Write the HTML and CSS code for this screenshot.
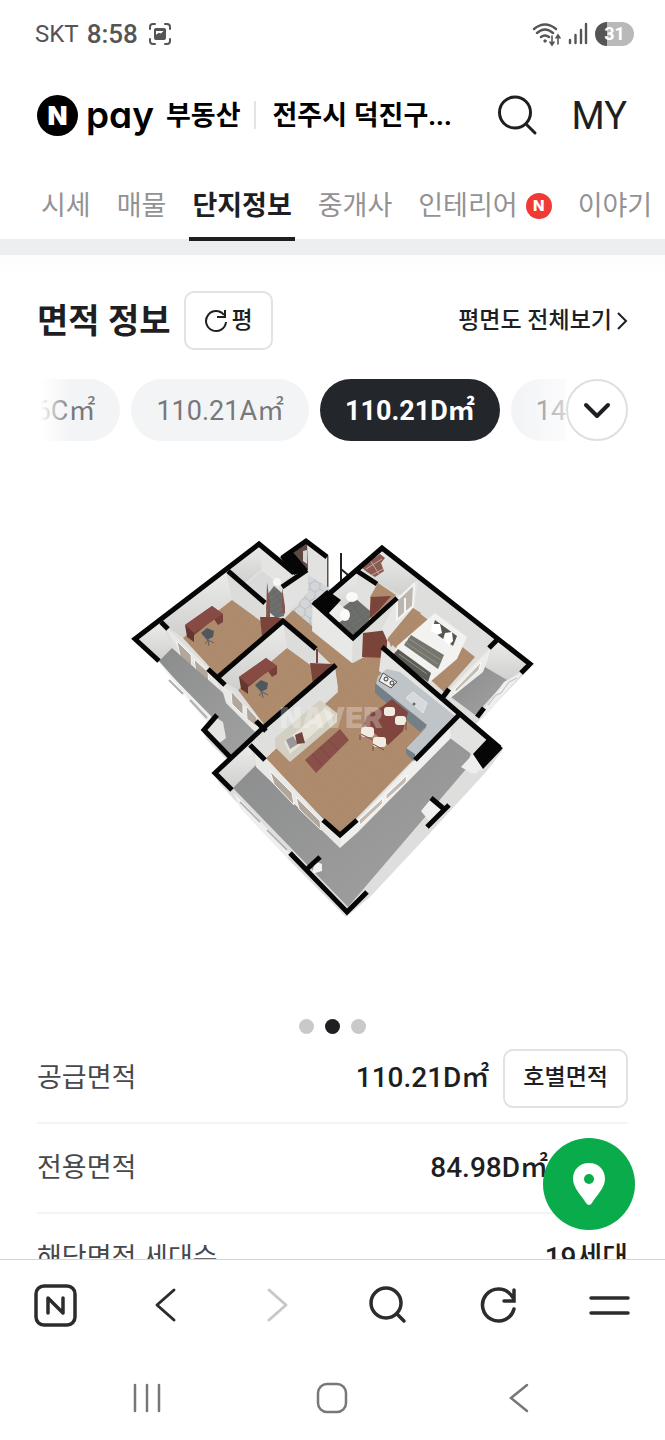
FILE: index.html
```
<!DOCTYPE html>
<html lang="ko">
<head>
    <meta charset="utf-8">
    <meta name="viewport" content="width=device-width, initial-scale=1">
    <title>Npay 부동산</title>
    <link rel="stylesheet" href="styles.css">
</head>
<body>
    <div class="status-bar">
        <span class="carrier">SKT</span>
        <span class="time">8:58</span>
        <svg class="capture" width="24" height="24" viewBox="0 0 24 24" fill="none" stroke="#555" stroke-width="2" stroke-linecap="round">
            <path d="M2 7V5q0-3 3-3h2M17 2h2q3 0 3 3v2M22 17v2q0 3-3 3h-2M7 22H5q-3 0-3-3v-2"/>
            <rect x="7" y="7" width="10" height="10" rx="1"/>
            <path d="M7 8h10M8 16v-2l3-2 2 1 3-3v6z" fill="#555"/>
        </svg>
        <svg class="wifi" width="30" height="26" viewBox="0 0 30 26" fill="none" stroke="#555" stroke-width="2.400" stroke-linecap="round">
            <path d="M2 8q11-9 22 0M5 12q8-7 16 0M9 16q4-3 8 0"/>
            <circle cx="13" cy="20" r="1.200" fill="#555" stroke-width="1"/>
            <path d="M20 15v8m-2-2l2 3 2-3M26 23v-8m-2 2l2-3 2 3" stroke-width="1.600"/>
        </svg>
        <svg width="20" height="24" viewBox="0 0 20 24" stroke="#555" stroke-width="2.400" stroke-linecap="round">
            <path d="M2 18v3M7.500 13v8M13 8v13M18 2v19"/>
        </svg>
        <span class="battery">31</span>
    </div>

    <header class="header">
        <a class="logo" href="#">
            <svg width="41" height="41" viewBox="0 0 41 41">
                <circle cx="20.500" cy="20.500" r="20.500"/>
                <text class="logo-n" x="20.500" y="30" text-anchor="middle">N</text>
            </svg>
            <span class="pay">pay</span>
            <span class="service">부동산</span>
        </a>
        <a class="region" href="#">전주시 덕진구...</a>
        <button class="icon-button search" aria-label="검색">
            <svg width="42" height="42" viewBox="0 0 42 42" fill="none" stroke="#1e1f23" stroke-width="3" stroke-linecap="round">
                <circle cx="19" cy="18.500" r="15.500"/>
                <path d="M30 30l9 9"/>
            </svg>
        </button>
        <a class="my" href="#">MY</a>
    </header>

    <nav class="tabs">
        <a href="#">시세</a>
        <a href="#">매물</a>
        <a class="active" href="#">단지정보</a>
        <a href="#">중개사</a>
        <a href="#">인테리어<span class="new">N</span></a>
        <a href="#">이야기</a>
    </nav>

    <main class="content">
        <div class="section-head">
            <h1>면적 정보</h1>
            <button class="outline-button unit">
                <svg width="24" height="24" viewBox="0 0 24 24" fill="none" stroke="#1e1f23" stroke-width="2">
                    <path d="M22 13a10 10 0 1 1-2-7M21 1v7h-8"/>
                </svg>
                평
            </button>
            <a class="view-all" href="#">평면도 전체보기
                <svg width="12" height="20" viewBox="0 0 12 20" fill="none" stroke="#1e1f23" stroke-width="2">
                    <path d="M2 2l8 8-8 8"/>
                </svg>
            </a>
        </div>

        <div class="sizes">
            <div class="size-list">
                <button class="size">84.96C㎡</button>
                <button class="size">110.21A㎡</button>
                <button class="size selected">110.21D㎡</button>
                <button class="size">142.12㎡</button>
            </div>
            <button class="more" aria-label="면적 더보기">
                <svg width="28" height="18" viewBox="0 0 28 18" fill="none" stroke="#1e1f23" stroke-width="4" stroke-linecap="round" stroke-linejoin="round">
                    <path d="M3 4l11 11L25 4"/>
                </svg>
            </button>
        </div>

        <svg class="plan" viewBox="37 441 591 578" role="img" aria-label="110.21D㎡ 평면도">
            <defs>
                <linearGradient id="wall" x1="0" y1="0" x2="0" y2="1">
                    <stop offset="0" stop-color="#ececea"/>
                    <stop offset="1" stop-color="#cfcfcd"/>
                </linearGradient>
                <linearGradient id="concrete" x1="0" y1="0" x2="1" y2="1">
                    <stop offset="0" stop-color="#8b8c8d"/>
                    <stop offset="1" stop-color="#a2a2a2"/>
                </linearGradient>
                <pattern id="wood" width="24" height="10" patternUnits="userSpaceOnUse" patternTransform="rotate(-48)">
                    <rect width="24" height="10" fill="#af8b6d"/>
                    <path d="M0 1h24M0 6h24M8 1v5M18 6v5" stroke="#a78466" stroke-width=".6"/>
                </pattern>
                <pattern id="tile" width="10" height="17" patternUnits="userSpaceOnUse">
                    <rect width="10" height="17" fill="#d3d6d8"/>
                    <path d="M5 0v3l5 3v5l-5 3v3M5 3L0 6v5l5 3" fill="none" stroke="#b4b9bc" stroke-width=".8"/>
                </pattern>
                <pattern id="slate" width="14" height="5" patternUnits="userSpaceOnUse" patternTransform="rotate(-36)">
                    <rect width="14" height="5" fill="#6c6f6c"/>
                    <path d="M0 0h14v5" fill="none" stroke="#5b5e5b" stroke-width=".7"/>
                </pattern>
                <g id="desk">
                    <path d="M0 19L27 0l11 8v8l-5 3-4-6-21 17z" fill="#74413a"/>
                    <path d="M0 19L27 0l11 8L9 27z" fill="#884b43"/>
                    <path d="M0 19l9 8v9l-7-5z" fill="#65362f"/>
                    <path d="M23 34l-3 4m3-4l6 3m-6-3l1 6" stroke="#5a6064"/>
                    <path d="M16 27l6-5 7 3-1 6-6 3z" fill="#50575d"/>
                </g>
            </defs>

            <!-- outer wall sides -->
            <path d="M133 639L159 662 210 718 202 730 207 740 232 765 214 774 220 784 290 861 346 917 370 897 430 833 452 809 486 772 503 750 476 724 530 668 532 663 382 546 353 570 330 592 327 556 306 539 282 559 259 542z" fill="#dededc"/>
            <path d="M328 558V588L352 570 342 566z" fill="#fff"/>
            <path d="M327 556v31" stroke="#5a5350" stroke-width="3"/>
            <path d="M341 553v28M341 569l7 6" stroke="#222" stroke-width="2"/>

            <!-- room 1 -->
            <path d="M161 622L226 570 232 600 183 638z" fill="url(#wall)"/>
            <path d="M226 570L265 603 262 626 232 600z" fill="#dcdcda"/>
            <path d="M183 638L232 600 262 622 274 628 219 677z" fill="url(#wood)"/>
            <use href="#desk" x="185" y="606"/>
            <path d="M164 625L216 676 220 690 176 645z" fill="#e8e8e6"/>
            <path d="M177 641l14 14 1 13-12-12zM194 659l14 13 1 12-13-12z" fill="#b3a79b" stroke="#f4f4f2"/>

            <!-- left balcony -->
            <path d="M135 639L161 622 172 648 159 661z" fill="url(#wall)"/>
            <path d="M159 661L172 648 222 692 262 732 232 757 218 744 217 727z" fill="url(#concrete)"/>
            <path d="M159 663L211 716 217 728 205 720z" fill="#efefed"/>
            <path d="M169 680l14 14M190 700l17 18" stroke="#aeb1b2" stroke-width="2"/>
            <path d="M204 730l11-13 8 5 3 16-9 7 15 17z" fill="#e4e4e2"/>

            <!-- bathroom 1 -->
            <path d="M228 569L259 543 262 570 245 584z" fill="url(#wall)"/>
            <path d="M259 543L294 573 280 584 262 570z" fill="#e4e4e2"/>
            <path d="M245 584l17-14 19 14-18 18z" fill="#dadada" stroke="#ececea"/>
            <path d="M268 594l6-8 9 8 1 22-8 2-10-9z" fill="url(#slate)"/>
            <path d="M267 582l3 22v18l-4-4zM282 588l3 2v24l-3-2z" fill="#84564d"/>
            <circle cx="277" cy="582" r="4" fill="#f6f6f4"/>

            <!-- entrance -->
            <path d="M282 587L307 570 308 592 286 613z" fill="#e2e2e0"/>
            <path d="M307 540L327 557 327 588 309 574z" fill="#e2e2e0"/>
            <path d="M308 575l20 12 3 5-19 10v26l-19-18 15-18z" fill="url(#tile)"/>
            <path d="M293 553l14-11 1 28-3-1z" fill="#5d4843"/>
            <path d="M303 551l4-1v14l-4-3z" fill="#d9d5d1"/>

            <!-- hall, living room and kitchen -->
            <path d="M284 619L293 610 318 631 353 663 364 657 384 650 382 675 427 727 407 748 413 760 340 835 323 819 266 758 338 692 335 668z" fill="url(#wood)"/>
            <path d="M335 668L338 688 318 705 276 748 266 758 252 745z" fill="#dfdfdd"/>
            <path d="M313 603L353 638 352 663 312 631z" fill="#e8e8e6"/>
            <path d="M353 638L397 598V616L364 650 352 663z" fill="#dddddb"/>
            <path d="M363 633l25-3-2 28-24-1z" fill="#7b443b"/>

            <!-- room 2 -->
            <path d="M217 678L283 620 287 648 238 690z" fill="url(#wall)"/>
            <path d="M283 620L317 648 313 667 287 648z" fill="#dcdcda"/>
            <path d="M238 690L287 648 313 667 325 675 266 727z" fill="url(#wood)"/>
            <use href="#desk" x="239" y="658"/>
            <path d="M220 682L262 724 258 735 226 703z" fill="#e8e8e6"/>
            <path d="M231 691l12 13v11l-11-11zM246 706l11 12v9l-10-8z" fill="#b3a79b" stroke="#f4f4f2"/>
            <path d="M310 663l23 1-20 21z" fill="#7b443b"/>
            <path d="M317 649v14" stroke="#7b443b" stroke-width="2"/>
            <path d="M260 617h17l7 2-14 11-8 6z" fill="#7b443b"/>

            <!-- bathroom 2 -->
            <path d="M330 593L358 571 355 598 330 617z" fill="url(#wall)"/>
            <path d="M358 571L376 584 370 611 355 598z" fill="#e1e1df"/>
            <path d="M343 607l12-9 15 13-1 9-16 15-17-14z" fill="url(#slate)"/>
            <path d="M328 612l11-8 10 8v6l-6 2-8 5z" fill="#ececea"/>
            <ellipse cx="345" cy="615" rx="5" ry="6" fill="#fafaf8"/>
            <ellipse cx="352" cy="597" rx="6" ry="5" fill="#fafaf8"/>

            <!-- dressing room -->
            <path d="M357 570L382 547 418 580 404 597 378 583z" fill="url(#wall)"/>
            <path d="M378 583l18 12-25 24-1-22z" fill="url(#wood)"/>
            <path d="M371 597l20-1-12 14-10 9z" fill="#7b443b"/>
            <path d="M361 567l19-13 5 4-4 5 3 8-9 6-8-5z" fill="#8c5b51"/>
            <path d="M366 569l16-10M372 575l11-6M370 560l9 14" stroke="#c3a8a0"/>

            <!-- bedroom -->
            <path d="M418 580L497 640 475 657 413 608z" fill="#dededc"/>
            <path d="M386 639L413 608 475 657 444 692z" fill="url(#wood)"/>
            <path d="M382 629l13-26 23-23-4 27-27 33z" fill="#e6e6e4"/>
            <path d="M388 638l25-30 8 5-30 34z" fill="url(#wood)"/>
            <path d="M397 600l17-16-1 22-16 14z" fill="#bcb6ae" stroke="#f4f4f2" stroke-width="2"/>
            <path d="M405 598v15" stroke="#f4f4f2" stroke-width="2"/>
            <path d="M435 613L467 637 457 659 430 682 394 654 397 646z" fill="#f2f2f0"/>
            <path d="M435 620l22 16-4 10-21-15z" fill="#55564f"/>
            <path d="M432 624l8 0 2 9-5 2-6-4zM445 633l7-1 1 9-4 4-6-5z" fill="#fff"/>
            <path d="M411 635l33 20-6 14-34-24z" fill="#77766e"/>
            <path d="M398 649l33 24-3 9-36-26z" fill="#5c5b56"/>
            <path d="M399 654l28 20M405 642l33 22M408 638l33 22" stroke="#94938b"/>

            <!-- right balcony -->
            <path d="M497 640L532 663 507 681 485 667z" fill="url(#wall)"/>
            <path d="M485 667L507 680 475 715 451 697z" fill="url(#concrete)"/>
            <path d="M493 645L483 672 448 700 449 690z" fill="#ecece9"/>
            <path d="M455 689l26-27-2 8-24 23z" fill="#c4bdb4" stroke="#fff"/>
            <path d="M524 671L482 720 484 709 504 682z" fill="#eee"/>
            <path d="M488 705l8-10 5-2 8-11 8-4" fill="none" stroke="#bbb"/>

            <!-- kitchen counter -->
            <path d="M382 647L458 712 450 724 379 671z" fill="#e4e4e2"/>
            <path d="M378 676L387 669 400 672 456 717 413 758 407 748 427 727 376 684z" fill="#bfc4c8"/>
            <path d="M375 683L427 725 420 732 375 693zM406 748l9 6v8l-9-8z" fill="#747f87"/>
            <path d="M383 673l14 9-6 6-12-7z" fill="#eee" stroke="#555"/>
            <circle cx="386" cy="679" r="2" fill="none" stroke="#333"/>
            <circle cx="392" cy="683" r="2" fill="none" stroke="#333"/>
            <path d="M406 698l7-6 14 11-4 10z" fill="#d7dadc" stroke="#e6e6e6"/>
            <circle cx="414" cy="704" r="1.500" fill="#666"/>

            <!-- dining table and sofa -->
            <path d="M383 706L392 699 408 712 403 731 388 745 364 724 367 716z" fill="#80453e"/>
            <g fill="#f0ece4">
                <rect x="384" y="707" width="11" height="9" rx="3"/>
                <rect x="395" y="716" width="11" height="9" rx="3"/>
                <rect x="361" y="727" width="13" height="10" rx="3"/>
                <rect x="373" y="737" width="13" height="10" rx="3"/>
            </g>
            <path d="M361 734l12 6M360 735v5M373 744l11 6M373 746v5M406 722v8" stroke="#80453e"/>
            <path d="M275 738L320 700 337 713V722L290 762 275 747z" fill="#d3cfc3"/>
            <path d="M284 742L324 709 335 715 290 754z" fill="#e6e2d7"/>
            <path d="M286 740l7-4 5 8-8 5z" fill="#99979a"/>
            <path d="M295 735l7-3 3 11-8 1z" fill="#71433d"/>
            <path d="M305 760L340 729 349 740 316 773z" fill="#89504a"/>
            <path d="M312 754l10 11M320 747l10 11M328 740l10 10" stroke="#7d433d"/>

            <!-- front balcony -->
            <path d="M216 773L250 746 256 765 233 788z" fill="url(#wall)"/>
            <path d="M233 788L256 765 340 847 450 737 471 752 467 768 348 907z" fill="url(#concrete)"/>
            <path d="M254 746L323 819 341 837 340 848 256 767z" fill="#e8e8e6"/>
            <path d="M270 771l22 22 2 12-20-21zM296 797l24 24 1 9-22-21z" fill="#b0a69c" stroke="#f6f6f4"/>
            <path d="M341 837L415 760 450 724 451 738 358 832 340 848z" fill="#efefed"/>
            <path d="M359 820l24-22-1 6-22 21zM386 795l21-20-1 7-20 18z" fill="#c4b9ae" stroke="#fff"/>
            <path d="M460 714L488 741 474 756 450 738z" fill="#e2e2e0"/>
            <path d="M473 754l11 8-2 12-11-1-10-6z" fill="#eee"/>
            <path d="M430 800l12 9-13 12-8-10zM315 861l7 3v7l-10 3z" fill="#f0f0ee"/>
            <path d="M234 793L290 853 288 859 240 808z" fill="#efefed"/>
            <path d="M240 802l20 20M267 830l20 20" stroke="#aaa" stroke-width="1.500"/>
            <path d="M368 891L428 828M450 805L482 771" stroke="#dedede" stroke-width="5"/>

            <!-- cut wall tops -->
            <g fill="none" stroke="#060606" stroke-width="5">
                <path d="M159 661L135 639 259 544 294 573M307 570L282 587"/>
                <path d="M228 571L265 603M161 622l7 7M208 669l17 16M282 558l24-17 21 16"/>
                <path d="M217 678L283 621 316 649M336 665L263 728 215 773 232 790"/>
                <path d="M256 721l10 10M250 745L265 760M217 715L204 730 230 757"/>
                <path d="M330 593L382 548 530 664 521 673M357 571L377 584M313 602L353 638 397 598"/>
                <path d="M497 640L489 648M449 689L443 697M382 647L460 714 415 760M477 717l7-9M460 714L500 748M323 820L340 835 357 820"/>
                <path d="M290 853L347 912 367 892M308 868l12-11M427 827L449 805M431 798l13 11"/>
            </g>
            <path d="M280 557l12-6 16 19-14 5zM313 602l14-12 14 10-13 14zM487 739l16 9-20 21-10-15z" fill="#060606"/>

            <text class="watermark" x="331" y="728" text-anchor="middle">NAVER</text>
        </svg>

        <div class="dots">
            <span></span>
            <span class="on"></span>
            <span></span>
        </div>

        <dl class="info">
            <div class="row">
                <dt>공급면적</dt>
                <dd>110.21D㎡ <button class="outline-button">호별면적</button></dd>
            </div>
            <div class="row">
                <dt>전용면적</dt>
                <dd class="exclusive">84.98D㎡</dd>
            </div>
            <div class="row">
                <dt>해당면적 세대수</dt>
                <dd>19세대</dd>
            </div>
        </dl>
    </main>

    <footer class="footer">
        <button class="map-button" aria-label="지도">
            <svg width="34" height="42" viewBox="0 0 34 42">
                <path d="M17 0C7 0 1 7 1 16c0 9 9 17 13 24q3 4 6 0c4-7 13-15 13-24C33 7 27 0 17 0z" fill="#fff"/>
                <circle cx="17" cy="16" r="5" fill="#0aab4a"/>
            </svg>
        </button>
        <nav class="toolbar">
            <button class="icon-button" aria-label="네이버 홈">
                <svg width="44" height="44" viewBox="0 0 44 44" fill="none" stroke="#2c2c2c" stroke-width="3.500" stroke-linecap="round" stroke-linejoin="round">
                    <rect x="3" y="2" width="39" height="39" rx="8"/>
                    <path d="M15 29V14l15 15V14"/>
                </svg>
            </button>
            <button class="icon-button" aria-label="뒤로">
                <svg width="44" height="44" viewBox="0 0 44 44" fill="none" stroke="#2c2c2c" stroke-width="3" stroke-linecap="round" stroke-linejoin="round">
                    <path d="M30 6L13 21l17 15"/>
                </svg>
            </button>
            <button class="icon-button" aria-label="앞으로">
                <svg width="44" height="44" viewBox="0 0 44 44" fill="none" stroke="#c8c8c8" stroke-width="3" stroke-linecap="round" stroke-linejoin="round">
                    <path d="M14 6l17 15-17 15"/>
                </svg>
            </button>
            <button class="icon-button" aria-label="검색">
                <svg width="44" height="44" viewBox="0 0 44 44" fill="none" stroke="#2c2c2c" stroke-width="3.500" stroke-linecap="round">
                    <circle cx="20" cy="19" r="15"/>
                    <path d="M31 30l7 7"/>
                </svg>
            </button>
            <button class="icon-button" aria-label="새로고침">
                <svg width="44" height="44" viewBox="0 0 44 44" fill="none" stroke="#2c2c2c" stroke-width="3.500" stroke-linecap="round">
                    <path d="M37 25A16 16 0 1 1 34 11l3 4M37 6v11H27"/>
                </svg>
            </button>
            <button class="icon-button" aria-label="메뉴">
                <svg width="44" height="44" viewBox="0 0 44 44" stroke="#2c2c2c" stroke-width="3.500" stroke-linecap="round">
                    <path d="M3 14h37M3 29h37"/>
                </svg>
            </button>
        </nav>
        <nav class="system-nav">
            <button class="icon-button" aria-label="최근 앱">
                <svg width="44" height="44" viewBox="0 0 44 44" stroke="#777" stroke-width="2.500" stroke-linecap="round">
                    <path d="M10 9v26M22 9v26M34 9v26"/>
                </svg>
            </button>
            <button class="icon-button" aria-label="홈">
                <svg width="44" height="44" viewBox="0 0 44 44" fill="none" stroke="#777" stroke-width="2.500">
                    <rect x="8" y="8" width="28" height="28" rx="9"/>
                </svg>
            </button>
            <button class="icon-button" aria-label="이전">
                <svg width="44" height="44" viewBox="0 0 44 44" fill="none" stroke="#777" stroke-width="2.500" stroke-linecap="round">
                    <path d="M31 9L15 22l16 13"/>
                </svg>
            </button>
        </nav>
    </footer>
</body>
</html>
```
FILE: styles.css
```
* {
    box-sizing: border-box;
}
body {
    margin: 0;
    height: 100vh;
    display: flex;
    flex-direction: column;
    background: #fff;
    color: #1e1f23;
    font-family: Roboto, "Noto Sans CJK KR", sans-serif;
    font-size: 27px;
    line-height: 36px;
    overflow: hidden;
}
a {
    color: inherit;
    text-decoration: none;
}
button {
    font: inherit;
    color: inherit;
    background: none;
    border: 0;
    padding: 0;
    cursor: pointer;
}
svg {
    display: block;
    flex: none;
}

/* phone status bar */
.status-bar {
    flex: none;
    display: flex;
    align-items: center;
    height: 68px;
    padding: 0 31px 0 35px;
    color: #555;
}
.carrier {
    font-size: 24px;
    margin-right: 8px;
}
.time {
    font-size: 26px;
    font-weight: 500;
}
.capture {
    margin-left: 10px;
}
.wifi {
    margin: 0 6px 0 auto;
}
.battery {
    width: 39px;
    margin-left: 7px;
    border-radius: 12px;
    background: linear-gradient(to right, #555 30%, #b9b9b9 30%);
    color: #fff;
    font-size: 18px;
    font-weight: 700;
    line-height: 24px;
    text-align: center;
}

/* header */
.header {
    flex: none;
    display: flex;
    align-items: center;
    height: 94px;
    padding: 0 38px 0 37px;
    color: #000;
    font-weight: 700;
}
.logo {
    display: flex;
    align-items: center;
}
.logo-n {
    fill: #fff;
    font: 900 26px Inter, sans-serif;
}
.pay {
    margin: 0 12px 0 8px;
    font: 600 37px/40px Inter, sans-serif;
    font-feature-settings: "cv11";
}
.service {
    padding-top: 2px;
}
.region {
    margin-left: 14px;
    padding: 2px 0 0 16px;
    border-left: 2px solid #e4e4e4;
    line-height: 26px;
    white-space: nowrap;
}
.search {
    margin-left: auto;
}
.my {
    margin-left: 34px;
    padding-top: 2px;
    color: #1e1f23;
    font-size: 38px;
    font-weight: 400;
}

.tabs {
    flex: none;
    display: flex;
    gap: 20px;
    height: 79px;
    margin-bottom: -2px;
    padding: 0 38px;
    color: #929294;
    white-space: nowrap;
    position: relative;
}
.tabs a {
    display: flex;
    align-items: center;
    flex: none;
    padding: 13px 3px 0;
    border-bottom: 4px solid transparent;
}
.tabs .active {
    color: #1e1f23;
    font-weight: 700;
    border-bottom-color: #1e1f23;
}
.new {
    width: 26px;
    margin-left: 8px;
    border-radius: 50%;
    background: #f03a36;
    color: #fff;
    font: 800 15px/26px Inter, sans-serif;
    text-align: center;
}

.content {
    flex: 1;
    min-height: 0;
    overflow: hidden;
    padding: 36px 37px 0;
    border-top: 16px solid #edeef0;
    background: linear-gradient(#fcfcfc, #fff 24px);
}
.section-head {
    display: flex;
    align-items: center;
}
h1 {
    margin: 0 13px 0 0;
    font-size: 34px;
    line-height: 44px;
}
.outline-button {
    height: 59px;
    padding: 0 18px;
    border: 2px solid #e1e2e3;
    border-radius: 10px;
    background: #fff;
    font-size: 23px;
    font-weight: 500;
}
.unit {
    display: flex;
    align-items: center;
    gap: 4px;
}
.view-all {
    display: flex;
    align-items: center;
    gap: 4px;
    margin-left: auto;
    font-size: 23px;
    font-weight: 500;
}

/* size chips */
.sizes {
    display: flex;
    position: relative;
    margin-top: 29px;
}
.size-list {
    flex: 1;
    display: flex;
    gap: 11px;
    min-width: 0;
    overflow: hidden;
}
.size-list::before,
.size-list::after {
    content: "";
    position: absolute;
    top: 0;
    left: 0;
    width: 34px;
    height: 100%;
    background: linear-gradient(to right, #fff 10%, rgba(255, 255, 255, 0));
}
.size-list::after {
    left: auto;
    right: 62px;
    width: 48px;
    background: linear-gradient(to left, rgba(255, 255, 255, .7), rgba(255, 255, 255, 0));
}
.size {
    flex: none;
    height: 62px;
    padding: 2px 25px 0;
    border-radius: 31px;
    background: #f3f4f6;
    color: #77787a;
    font-size: 27px;
}
.size:first-child {
    margin-left: -79px;
}
.selected {
    background: #23262b;
    color: #fff;
    font-weight: 700;
}
.more {
    display: flex;
    align-items: center;
    justify-content: center;
    width: 62px;
    height: 62px;
    border: 2px solid #dedfe0;
    border-radius: 50%;
}

.plan {
    width: 100%;
}
.watermark {
    fill: #fff;
    fill-opacity: .3;
    font: 900 29px Inter, sans-serif;
}
.dots {
    display: flex;
    justify-content: center;
    gap: 11px;
}
.dots span {
    width: 15px;
    height: 15px;
    border-radius: 50%;
    background: #c8c9cb;
}
.dots .on {
    background: #1e1f23;
}

.info {
    margin: 0;
}
.row {
    display: flex;
    align-items: center;
    justify-content: space-between;
    height: 90px;
    border-bottom: 2px solid #f4f4f5;
}
.row dt {
    color: #47484b;
}
.row dd {
    display: flex;
    align-items: center;
    gap: 14px;
    margin: 0;
    font-size: 28px;
    font-weight: 500;
}
.row .exclusive {
    padding-right: 80px;
}

/* bottom bars */
.footer {
    flex: none;
    position: relative;
    background: #fff;
    border-top: 1px solid #d4d4d4;
}
.map-button {
    position: absolute;
    right: 30px;
    bottom: 100%;
    display: flex;
    align-items: center;
    justify-content: center;
    width: 92px;
    height: 92px;
    margin-bottom: 30px;
    border-radius: 50%;
    background: #0aab4a;
}
.toolbar {
    display: flex;
    align-items: center;
    justify-content: space-between;
    height: 92px;
    padding: 0 33px;
}
.system-nav {
    display: flex;
    align-items: center;
    justify-content: space-around;
    height: 88px;
    padding: 4px 54px 0;
}
```
